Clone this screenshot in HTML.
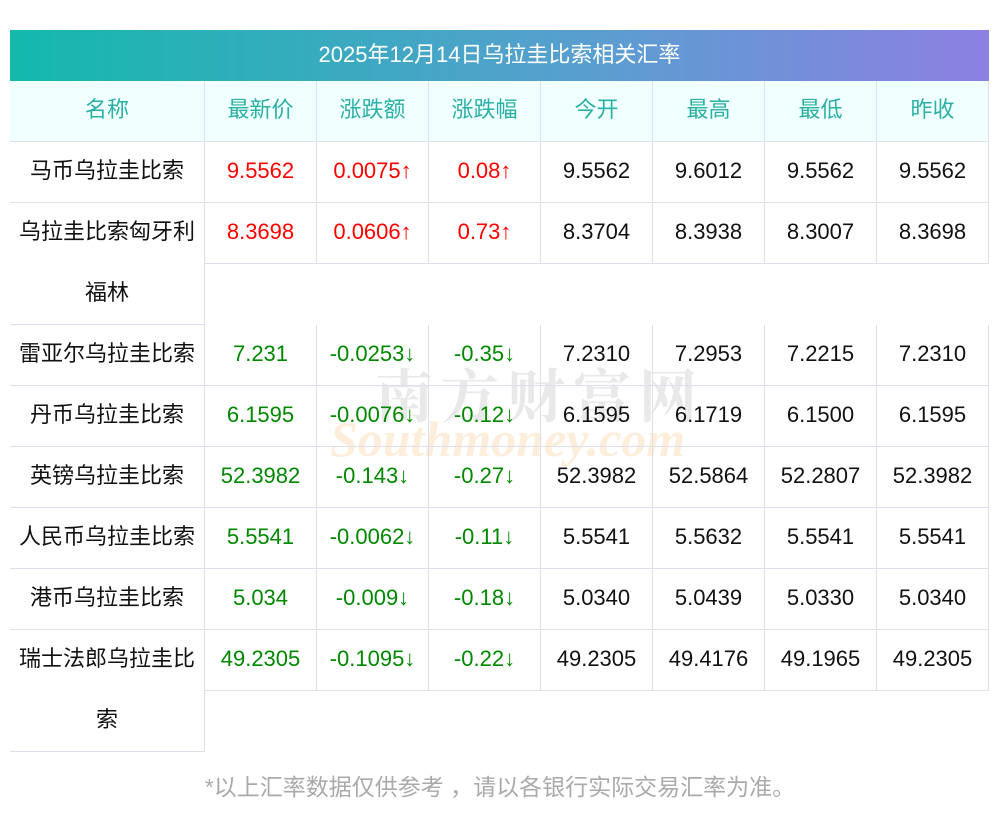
<!DOCTYPE html>
<html><head><meta charset="utf-8"><style>
body{margin:0;width:1000px;height:817px;background:#fff;position:relative;font-family:"Liberation Sans","Noto Sans CJK SC",sans-serif;overflow:hidden}
.t{position:absolute;left:10px;top:30px;width:979px;height:51px;background:linear-gradient(90deg,#13b9ac,#5a9ed0 60%,#8d80e2);color:#fff;font-size:22px;line-height:49px;text-align:center}
.c{position:absolute;box-sizing:border-box;border-right:1px solid #dde0ea;border-bottom:1px solid #dde0ea;font-size:22px;text-align:center;line-height:61px;height:61px;white-space:nowrap}
.c span{position:relative;top:-2px}
.h{background:#f0ffff;color:#2bb0a6}
.r{color:#f00}.g{color:#080}.k{color:#111}
.n{line-height:61px;white-space:normal;padding:0 8px}
.w{position:absolute;font-weight:bold;color:rgba(200,200,200,.4);font-family:"Liberation Serif","Noto Serif CJK SC",serif}
.f{position:absolute;left:0;width:1000px;top:768px;text-align:center;font-size:23px;color:#aaa}
</style></head><body>
<div class="t">2025年12月14日乌拉圭比索相关汇率</div>
<div class="w" style="left:375px;top:350px;font-size:58px;letter-spacing:8px">南方财富网</div>
<div class="w" style="left:330px;top:410px;font-size:50px;font-style:italic;color:rgba(250,200,140,.3)">Southmoney.com</div>
<div id="g"></div>
<div class="f">*以上汇率数据仅供参考 ，请以各银行实际交易汇率为准。</div>
<script>
var X=[10,205,317,429,541,653,765,877,989];
var hd=["名称","最新价","涨跌额","涨跌幅","今开","最高","最低","昨收"];
var rows=[
["马币乌拉圭比索","9.5562","0.0075↑","0.08↑","9.5562","9.6012","9.5562","9.5562","r",1],
["乌拉圭比索匈牙利福林","8.3698","0.0606↑","0.73↑","8.3704","8.3938","8.3007","8.3698","r",2],
["雷亚尔乌拉圭比索","7.231","-0.0253↓","-0.35↓","7.2310","7.2953","7.2215","7.2310","g",1],
["丹币乌拉圭比索","6.1595","-0.0076↓","-0.12↓","6.1595","6.1719","6.1500","6.1595","g",1],
["英镑乌拉圭比索","52.3982","-0.143↓","-0.27↓","52.3982","52.5864","52.2807","52.3982","g",1],
["人民币乌拉圭比索","5.5541","-0.0062↓","-0.11↓","5.5541","5.5632","5.5541","5.5541","g",1],
["港币乌拉圭比索","5.034","-0.009↓","-0.18↓","5.0340","5.0439","5.0330","5.0340","g",1],
["瑞士法郎乌拉圭比索","49.2305","-0.1095↓","-0.22↓","49.2305","49.4176","49.1965","49.2305","g",2]];
var h='';
function cell(x,y,w,ht,cls,txt){return '<div class="c '+cls+'" style="left:'+x+'px;top:'+y+'px;width:'+w+'px;height:'+ht+'px"><span>'+txt+'</span></div>';}
for(var i=0;i<8;i++)h+=cell(X[i],81,X[i+1]-X[i],61,'h',hd[i]);
var y=142;
rows.forEach(function(r){
 var ht=61*r[9];
 h+=cell(X[0],y,X[1]-X[0],ht,'k n',r[0]);
 for(var i=1;i<8;i++)h+=cell(X[i],y,X[i+1]-X[i],61,i<4?r[8]:'k',r[i]);
 y+=ht;
});
document.getElementById('g').innerHTML=h;
</script>
</body></html>
